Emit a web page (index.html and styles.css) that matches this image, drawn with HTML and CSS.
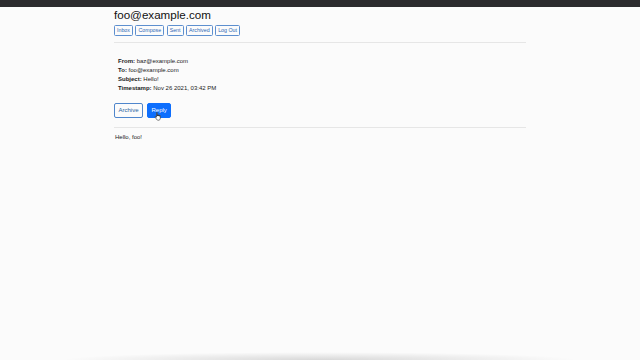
FILE: index.html
```html
<!DOCTYPE html>
<html>
<head>
<meta charset="utf-8">
<link rel="stylesheet" href="styles.css">
</head>
<body>
<div class="page">
  <div class="topbar"></div>
  <div class="container">
    <h2 class="user">foo@example.com</h2>
    <nav class="nav">
      <button class="btn-sm">Inbox</button>
      <button class="btn-sm">Compose</button>
      <button class="btn-sm">Sent</button>
      <button class="btn-sm">Archived</button>
      <button class="btn-sm">Log Out</button>
    </nav>
    <hr class="rule rule-top">
    <div class="details">
      <div><b>From:</b> baz@example.com</div>
      <div><b>To:</b> foo@example.com</div>
      <div><b>Subject:</b> Hello!</div>
      <div><b>Timestamp:</b> Nov 26 2021, 03:42 PM</div>
    </div>
    <div class="actions">
      <button class="btn btn-outline">Archive</button>
      <button class="btn btn-primary">Reply
        <svg class="cursor" width="8" height="9" viewBox="0 0 16 18"><path d="M5 1.5c0-1 1.6-1 1.6 0V8h.4V6.2c0-1 1.6-1 1.6 0V8h.4V6.8c0-1 1.6-1 1.6 0V8.4h.4V7.6c0-1 1.6-1 1.6 0v4.6c0 2.4-1.4 4.3-3.6 4.3H8.2c-1.4 0-2.3-.7-3-1.8L2.4 10.4c-.6-1 .6-1.8 1.4-1L5 10.6z" fill="#fff" stroke="#111" stroke-width="1.1"/></svg>
      </button>
    </div>
    <hr class="rule rule-body">
    <p class="body-text">Hello, foo!</p>
  </div>
  <div class="spacer"></div>
  <div class="shadow"></div>
</div>
</body>
</html>
```
FILE: styles.css
```css
html, body {
  margin: 0;
  padding: 0;
  background: #fbfbfb;
}
body {
  font-family: "Liberation Sans", Arial, sans-serif;
  color: #212529;
  font-size: 6px;
  line-height: 9px;
}
.page {
  min-height: 360px;
  display: flex;
  flex-direction: column;
  overflow: hidden;
}
.topbar {
  height: 7px;
  background: #2c2b2e;
  flex: none;
}
.container {
  width: 412px;
  margin: 0 auto;
  flex: none;
}
.user {
  margin: 1px 0 0 0;
  font-size: 11.6px;
  line-height: 14px;
  font-weight: 500;
  color: #111;
}
.nav {
  display: flex;
  gap: 2.5px;
  margin-top: 3px;
}
.btn-sm {
  font-family: inherit;
  font-size: 5.3px;
  line-height: 7px;
  padding: 1px 2px;
  border: 1px solid #5d8fcf;
  border-radius: 1.5px;
  background: transparent;
  color: #2a66b5;
  margin: 0;
}
.rule {
  border: 0;
  height: 1px;
  background: #e6e6e6;
  margin: 0;
}
.rule-top { margin-top: 6px; }
.details {
  padding-left: 4px;
  margin-top: 14px;
  color: #1a1a1a;
}
.details b { font-weight: 700; }
.actions {
  display: flex;
  gap: 4px;
  margin-top: 10px;
}
.btn {
  font-family: inherit;
  font-size: 6px;
  line-height: 9px;
  padding: 2px 3.5px;
  border: 1px solid #4f86cc;
  border-radius: 2px;
  margin: 0;
  position: relative;
}
.btn-outline {
  background: transparent;
  color: #2a5f9e;
}
.btn-primary {
  background: #0d6efd;
  border-color: #0d6efd;
  color: #fff;
}
.cursor {
  position: absolute;
  left: 6px;
  top: 8px;
}
.rule-body { margin-top: 9px; }
.body-text {
  margin: 5px 0 0 1px;
  color: #1a1a1a;
}
.spacer { flex: 1; }
.shadow {
  flex: none;
  height: 8px;
  margin: 0 60px;
  background: radial-gradient(ellipse at 50% 100%, rgba(0,0,0,0.14), rgba(0,0,0,0) 70%);
}
```
